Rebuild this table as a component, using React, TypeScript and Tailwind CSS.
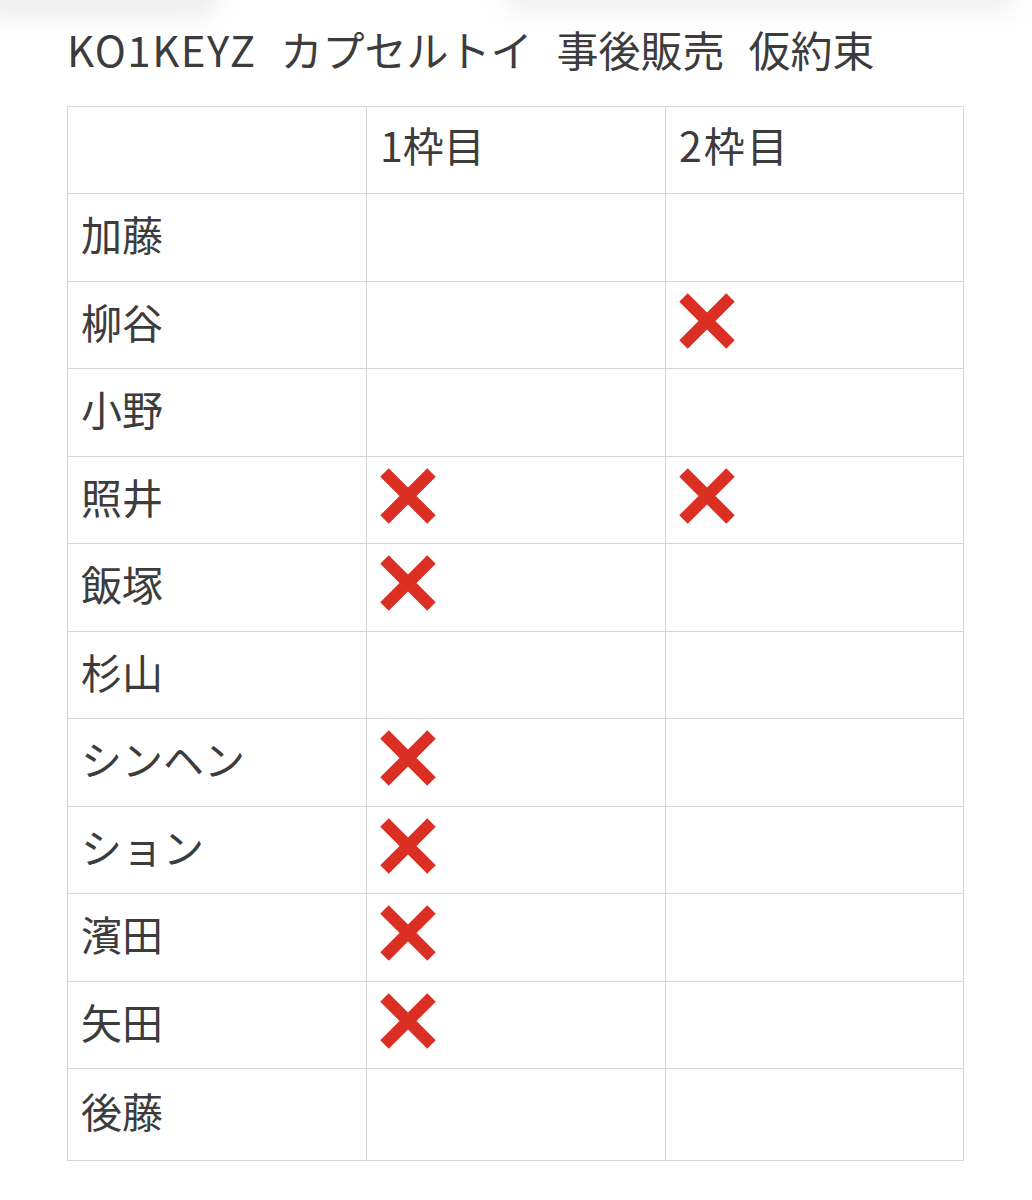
import React from "react";

const rows: { name: string; a: boolean; b: boolean }[] = [
  { name: "加藤", a: false, b: false },
  { name: "柳谷", a: false, b: true },
  { name: "小野", a: false, b: false },
  { name: "照井", a: true, b: true },
  { name: "飯塚", a: true, b: false },
  { name: "杉山", a: false, b: false },
  { name: "シンヘン", a: true, b: false },
  { name: "ション", a: true, b: false },
  { name: "濱田", a: true, b: false },
  { name: "矢田", a: true, b: false },
  { name: "後藤", a: false, b: false },
];

function Cross() {
  return (
    <svg width="56" height="56" viewBox="0 0 56 56" className="block">
      <path d="M4.5 4.5 L51.5 51.5 M51.5 4.5 L4.5 51.5" stroke="#dc2f23" strokeWidth="12" strokeLinecap="butt" />
    </svg>
  );
}

export default function App() {
  return (
    <div
      className="relative w-[1032px] h-[1200px] bg-white text-[#3c3c3c] overflow-hidden"
      style={{ fontFamily: '"Noto Sans CJK JP", "Noto Sans", sans-serif' }}
    >
      <div className="absolute left-[-40px] top-[-30px] w-[260px] h-[50px] rounded-full bg-[#f0f0f0] blur-[10px]" />
      <div className="absolute left-[500px] top-[-30px] w-[520px] h-[45px] rounded-full bg-[#f4f4f4] blur-[10px]" />
      <div className="relative pl-[67px] pt-[20px]">
        <h1 className="flex gap-[24px] text-[42px] leading-[58px] font-normal whitespace-nowrap">
          <span className="tracking-[1.5px]">KO1KEYZ</span>
          <span>カプセルトイ</span>
          <span>事後販売</span>
          <span>仮約束</span>
        </h1>
        <div className="mt-[28px] w-[897px] border border-[#d6d6d6]">
          <div className="grid grid-cols-[299px_299px_297px] h-[87px] border-b border-[#d6d6d6]">
            <div className="border-r border-[#d6d6d6]" />
            <div className="border-r border-[#d6d6d6] flex items-center pl-[13px] pb-[10px] text-[41px]">1枠目</div>
            <div className="flex items-center pl-[13px] pb-[10px] text-[41px] tracking-[2px]">2枠目</div>
          </div>
          {rows.map((r, i) => (
            <div
              key={r.name}
              className={`grid grid-cols-[299px_299px_297px] ${
                i === rows.length - 1 ? "h-[91px]" : "h-[87.5px] border-b border-[#d6d6d6]"
              }`}
            >
              <div className="border-r border-[#d6d6d6] flex items-center pl-[13px] pb-[7px] text-[41px]">
                {r.name}
              </div>
              <div className="border-r border-[#d6d6d6] flex items-center pl-[13px] pb-[8px]">
                {r.a && <Cross />}
              </div>
              <div className="flex items-center pl-[13px] pb-[8px]">{r.b && <Cross />}</div>
            </div>
          ))}
        </div>
      </div>
    </div>
  );
}
